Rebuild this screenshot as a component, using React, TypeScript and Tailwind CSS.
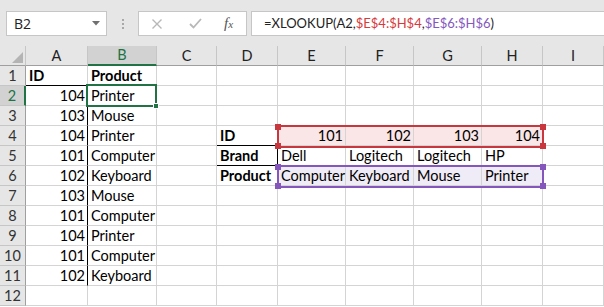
import React from 'react';

const COLS = ['A', 'B', 'C', 'D', 'E', 'F', 'G', 'H', 'I'];
const ids = [104, 103, 104, 101, 102, 103, 101, 104, 101, 102];
const products = ['Printer', 'Mouse', 'Printer', 'Computer', 'Keyboard', 'Mouse', 'Computer', 'Printer', 'Computer', 'Keyboard'];
const lookupIds = [101, 102, 103, 104];
const brands = ['Dell', 'Logitech', 'Logitech', 'HP'];
const lookupProducts = ['Computer', 'Keyboard', 'Mouse', 'Printer'];

type Cell = { v?: string | number; bold?: boolean; right?: boolean };

function getCell(r: number, c: string): Cell {
  if (c === 'A') {
    if (r === 1) return { v: 'ID', bold: true };
    if (r <= 11) return { v: ids[r - 2], right: true };
  }
  if (c === 'B') {
    if (r === 1) return { v: 'Product', bold: true };
    if (r <= 11) return { v: products[r - 2] };
  }
  if (c === 'D') {
    if (r === 4) return { v: 'ID', bold: true };
    if (r === 5) return { v: 'Brand', bold: true };
    if (r === 6) return { v: 'Product', bold: true };
  }
  const i = ['E', 'F', 'G', 'H'].indexOf(c);
  if (i >= 0) {
    if (r === 4) return { v: lookupIds[i], right: true };
    if (r === 5) return { v: brands[i] };
    if (r === 6) return { v: lookupProducts[i] };
  }
  return {};
}

function cellClass(r: number, c: string) {
  const blackBottom = (r === 1 && (c === 'A' || c === 'B')) || ((r === 4 || r === 5) && c === 'D');
  const blackRight = (c === 'A' && r >= 2 && r <= 11) || (c === 'D' && r === 5);
  const inEH = ['E', 'F', 'G', 'H'].includes(c);
  let bg = 'bg-white';
  if (inEH && r === 4) bg = 'bg-[#fae6e6]';
  if (inEH && r === 6) bg = 'bg-[#f0ecf7]';
  return [
    'h-[20px] border-r border-b flex items-center overflow-visible whitespace-nowrap',
    blackBottom ? 'border-b-black' : 'border-b-[#d4d4d4]',
    blackRight ? 'border-r-black' : 'border-r-[#d4d4d4]',
    bg,
  ].join(' ');
}

function Handle({ className }: { className: string }) {
  return <div className={`absolute w-[6px] h-[6px] ${className}`} />;
}

export default function App() {
  const rows = Array.from({ length: 12 }, (_, i) => i + 1);

  return (
    <div className="w-[604px] h-[307px] overflow-hidden bg-white font-['Lato',sans-serif] text-[14.5px] text-black">
      {/* formula bar */}
      <div className="h-[46px] bg-[#e6e6e6] flex items-start pt-[11px]">
        <div className="ml-[6px] w-[101px] h-[25px] bg-white border border-[#c6c6c6] flex items-center pl-[7px] pr-[6px] font-['Open_Sans',sans-serif] text-[14px] text-[#222]">
          <span className="flex-1">B2</span>
          <svg width="8" height="5" viewBox="0 0 8 5"><path d="M0 0h8L4 4.5z" fill="#707070" /></svg>
        </div>
        <div className="w-[31px] h-[25px] flex flex-col items-center justify-center gap-[2px]">
          <div className="w-[2px] h-[2px] bg-[#a8a8a8]" />
          <div className="w-[2px] h-[2px] bg-[#a8a8a8]" />
          <div className="w-[2px] h-[2px] bg-[#a8a8a8]" />
        </div>
        <div className="w-[109px] h-[25px] bg-white border border-[#c6c6c6] flex items-center">
          <svg className="ml-[12px]" width="12" height="12" viewBox="0 0 12 12">
            <path d="M1.5 1.5l9 9M10.5 1.5l-9 9" stroke="#b8b8b8" strokeWidth="1.4" />
          </svg>
          <svg className="ml-[26px]" width="13" height="11" viewBox="0 0 13 11">
            <path d="M1 6l3.5 3.5L12 1" stroke="#b8b8b8" strokeWidth="1.8" fill="none" />
          </svg>
          <span className="ml-[22px] font-['Liberation_Serif',serif] italic text-[15px] text-[#555]">
            f<span className="text-[11px]">x</span>
          </span>
        </div>
        <div className="ml-[4px] flex-1 h-[25px] bg-white border border-r-0 border-[#c6c6c6] flex items-center pl-[12px] text-[13px] text-[#222] whitespace-nowrap">
          <span>=XLOOKUP(A2,</span>
          <span className="text-[#d63b3b]">$E$4:$H$4</span>
          <span>,</span>
          <span className="text-[#8558c0]">$E$6:$H$6</span>
          <span>)</span>
        </div>
      </div>

      {/* sheet */}
      <div className="relative">
        <div className="grid grid-cols-[26px_62px_69px_60px_61px_68px_68px_68px_61px_61px]">
          {/* header row */}
          <div className="h-[20px] bg-[#e6e6e6] border-r border-b border-r-[#c6c6c6] border-b-[#9f9f9f] relative">
            <svg className="absolute left-[12px] top-[6px]" width="11" height="11" viewBox="0 0 11 11">
              <path d="M11 0V11H0z" fill="#b4b4b4" />
            </svg>
          </div>
          {COLS.map((c) =>
            c === 'B' ? (
              <div key={c} className="h-[20px] bg-[#d2d2d2] border-r border-b-2 border-r-[#c6c6c6] border-b-[#217346] flex items-center justify-center text-[#217346]">
                {c}
              </div>
            ) : (
              <div key={c} className="h-[20px] bg-[#e6e6e6] border-r border-b border-r-[#c6c6c6] border-b-[#9f9f9f] flex items-center justify-center text-[#222]">
                {c}
              </div>
            )
          )}

          {rows.map((r) => (
            <React.Fragment key={r}>
              {r === 2 ? (
                <div className="h-[20px] bg-[#d2d2d2] border-r-2 border-b border-r-[#217346] border-b-[#c6c6c6] flex items-center justify-center text-[#217346]">
                  {r}
                </div>
              ) : (
                <div className="h-[20px] bg-[#e6e6e6] border-r border-b border-r-[#9f9f9f] border-b-[#c6c6c6] flex items-center justify-center text-[#333]">
                  {r}
                </div>
              )}
              {COLS.map((c) => {
                const cell = getCell(r, c);
                return (
                  <div key={c} className={cellClass(r, c)}>
                    {cell.v !== undefined && (
                      <span className={`w-full pt-[1px] ${cell.right ? 'text-right pr-[2px]' : 'pl-[3px]'} ${cell.bold ? 'font-bold' : ''}`}>
                        {cell.v}
                      </span>
                    )}
                  </div>
                );
              })}
            </React.Fragment>
          ))}
        </div>

        {/* active cell B2 */}
        <div className="absolute left-[86px] top-[38px] w-[71px] h-[23px] border-2 border-[#217346]" />
        <div className="absolute left-[153px] top-[57px] w-[6px] h-[6px] bg-[#217346] border border-white" />

        {/* lookup array E4:H4 */}
        <div className="absolute left-[277px] top-[79px] w-[267px] h-[23px] border-2 border-[#c8373e]" />
        <Handle className="left-[275px] top-[78px] bg-[#c8373e]" />
        <Handle className="left-[540px] top-[78px] bg-[#c8373e]" />
        <Handle className="left-[275px] top-[97px] bg-[#c8373e]" />
        <Handle className="left-[540px] top-[97px] bg-[#c8373e]" />

        {/* return array E6:H6 */}
        <div className="absolute left-[277px] top-[119px] w-[267px] h-[23px] border-2 border-[#8557bd]" />
        <Handle className="left-[275px] top-[118px] bg-[#8557bd]" />
        <Handle className="left-[540px] top-[118px] bg-[#8557bd]" />
        <Handle className="left-[275px] top-[137px] bg-[#8557bd]" />
        <Handle className="left-[540px] top-[137px] bg-[#8557bd]" />
      </div>
    </div>
  );
}
